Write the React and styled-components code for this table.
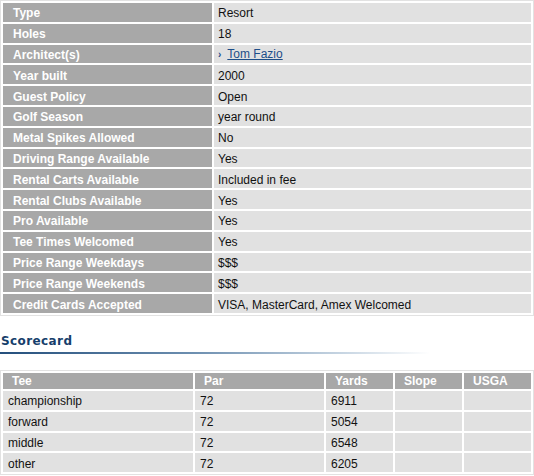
import React from "react";
import styled, { createGlobalStyle } from "styled-components";

const Global = createGlobalStyle`
  html, body { margin: 0; padding: 0; background: #fff; }
  body { font-family: "Liberation Sans", Arial, sans-serif; font-size: 12px; color: #111; }
`;

const Page = styled.div`
  width: 534px;
`;

const InfoTable = styled.table`
  width: 534px;
  border: 1px solid #e2e2e2;
  border-spacing: 2px;
  border-collapse: separate;
  table-layout: fixed;
`;

const Label = styled.td`
  width: 209px;
  height: 18.8px;
  box-sizing: border-box;
  padding: 2px 0 0 10px;
  background: #a8a8a8;
  color: #fff;
  font-weight: bold;
  font-size: 12px;
  line-height: 14px;
  vertical-align: middle;
`;

const Value = styled.td`
  height: 18.8px;
  box-sizing: border-box;
  padding: 2px 0 0 4px;
  background: #e1e1e1;
  color: #111;
  font-size: 12px;
  line-height: 14px;
  vertical-align: middle;
`;

const Chevron = styled.span`
  color: #1d4e89;
  font-size: 10px;
  font-weight: bold;
  margin-right: 6px;
`;

const Link = styled.a`
  color: #1d4e89;
  text-decoration: underline;
`;

const Heading = styled.div`
  margin-top: 14px;
  padding-left: 1px;
  height: 22px;
  font-family: "DejaVu Sans", Verdana, sans-serif;
  font-weight: bold;
  font-size: 12px;
  letter-spacing: 0.4px;
  color: #163e6b;
  line-height: 22px;
`;

const HeadingRule = styled.div`
  height: 2px;
  width: 430px;
  background: linear-gradient(to right, #244f7c 0%, #6d8fb0 45%, #c8d6e3 80%, rgba(255,255,255,0) 100%);
`;

const ScoreTable = styled.table`
  margin-top: 16px;
  width: 534px;
  border: 1px solid #e2e2e2;
  border-spacing: 2px;
  border-collapse: separate;
  table-layout: fixed;
`;

const Head = styled.th`
  height: 16px;
  box-sizing: border-box;
  padding: 1px 0 0 ${(p) => p.$pad || 9}px;
  background: #a8a8a8;
  color: #fff;
  font-weight: bold;
  font-size: 12px;
  line-height: 14px;
  text-align: left;
  vertical-align: middle;
`;

const Cell = styled.td`
  height: 18.8px;
  box-sizing: border-box;
  padding: 2px 0 0 5px;
  background: #e1e1e1;
  font-size: 12px;
  line-height: 14px;
  color: #111;
  vertical-align: middle;
`;

const info = [
  ["Type", "Resort"],
  ["Holes", "18"],
  ["Architect(s)", "link"],
  ["Year built", "2000"],
  ["Guest Policy", "Open"],
  ["Golf Season", "year round"],
  ["Metal Spikes Allowed", "No"],
  ["Driving Range Available", "Yes"],
  ["Rental Carts Available", "Included in fee"],
  ["Rental Clubs Available", "Yes"],
  ["Pro Available", "Yes"],
  ["Tee Times Welcomed", "Yes"],
  ["Price Range Weekdays", "$$$"],
  ["Price Range Weekends", "$$$"],
  ["Credit Cards Accepted", "VISA, MasterCard, Amex Welcomed"],
];

const scores = [
  ["championship", "72", "6911"],
  ["forward", "72", "5054"],
  ["middle", "72", "6548"],
  ["other", "72", "6205"],
];

export default function App() {
  return (
    <Page>
      <Global />
      <InfoTable>
        <tbody>
          {info.map(([k, v]) => (
            <tr key={k}>
              <Label>{k}</Label>
              <Value>
                {v === "link" ? (
                  <>
                    <Chevron>›</Chevron>
                    <Link href="#">Tom Fazio</Link>
                  </>
                ) : (
                  v
                )}
              </Value>
            </tr>
          ))}
        </tbody>
      </InfoTable>
      <Heading>Scorecard</Heading>
      <HeadingRule />
      <ScoreTable>
        <colgroup>
          <col style={{ width: 190 }} />
          <col style={{ width: 129 }} />
          <col style={{ width: 67 }} />
          <col style={{ width: 67 }} />
          <col />
        </colgroup>
        <thead>
          <tr>
            <Head $pad={9}>Tee</Head>
            <Head>Par</Head>
            <Head>Yards</Head>
            <Head>Slope</Head>
            <Head>USGA</Head>
          </tr>
        </thead>
        <tbody>
          {scores.map(([t, p, y]) => (
            <tr key={t}>
              <Cell>{t}</Cell>
              <Cell>{p}</Cell>
              <Cell>{y}</Cell>
              <Cell />
              <Cell />
            </tr>
          ))}
        </tbody>
      </ScoreTable>
    </Page>
  );
}
